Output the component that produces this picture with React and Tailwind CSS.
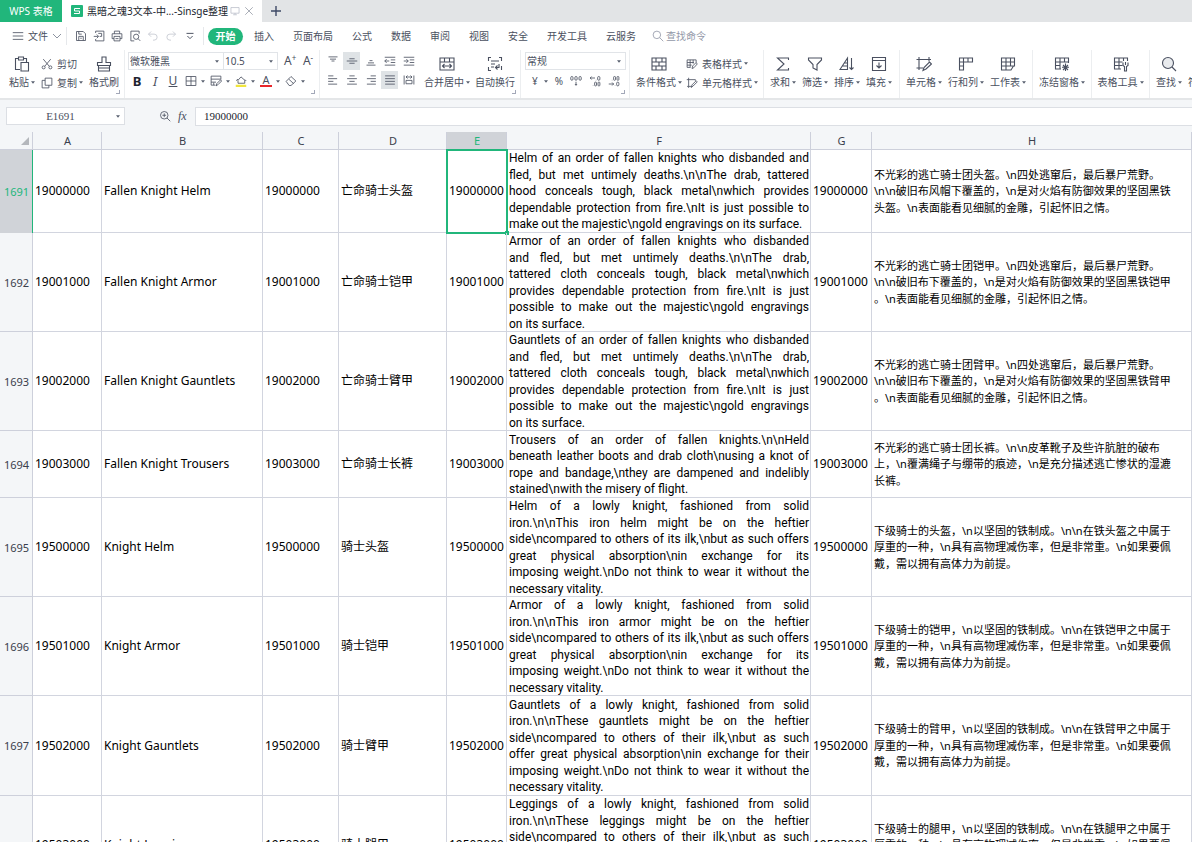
// sheet/App.jsx
const GREEN = "text-[#21b67b]";

/* ---------- icons ---------- */

const ICONS = {
  menu: <path d="M1 3.500h14M1 8h14M1 12.500h14" />,
  save: <><path d="M2 2h9l3 3v9H2z" /><path d="M5 14V8.500h6V14M5 2v3.500h4M7 11h2" /></>,
  exportPdf: <><path d="M3.500 4V1.500h11v13h-11V12" /><path d="M1 8.500h6M5 6l2.500 2.500L5 11M7 4.500h4.500v4H9" /></>,
  print: <><path d="M4.500 5v-3.500h7V5M4 11.500H1.500V5h13v6.500H12" /><path d="M4 8.500h8v6H4zM6 11.500h4" /></>,
  preview: <><path d="M13.500 5V1.500h-11v13H7" /><circle cx="9.500" cy="9" r="3.500" /><path d="M12 11.500l3 3" /></>,
  undo: <path d="M5.500 2L2 5.500 5.500 9M2 5.500h7.500a4 4 0 0 1 0 8H8" />,
  redo: <path d="M10.500 2L14 5.500 10.500 9M14 5.500H6.500a4 4 0 0 0 0 8H8" />,
  more: <path d="M4 5h8M5 8l3 3 3-3" />,
  search: <><circle cx="7" cy="7" r="5.500" fill="#e9ebee" /><path d="M11 11l4 4" /></>,
  find: <><circle cx="6.500" cy="6.500" r="5" /><path d="M10.300 10.300L15 15" /></>,
  zoomIn: <><circle cx="7" cy="7" r="5" /><path d="M10.600 10.600L15 15M4.500 7h5M7 4.500v5" /></>,
  monitor: <path d="M1.500 2.500h13v9h-13zM8 11.500v2M5 14h6" />,
  close: <path d="M2 2l12 12M14 2L2 14" />,
  paste: <><path d="M6 13.500H1.500v-11h3M9.500 2.500h3V6" /><path d="M4.500 1h5v3h-5zM7 6.500h7.500V15H7z" /></>,
  cut: <><path d="M3 1.500l8 9.500M13 1.500L5 11" /><circle cx="3.500" cy="12.500" r="2" /><circle cx="12.500" cy="12.500" r="2" /></>,
  copy: <path d="M5.500 1.500h9v9.500h-9zM5.500 4.500h-4v10h9V11" />,
  brush: <path d="M6 1h4v5.500h4.500v3h-13v-3H6zM2.500 9.500V15h11V9.500M2.500 12h11" />,
  borders: <path d="M1.500 2h13v12h-13zM8 2v12M1.500 8h13" />,
  drawBorder: <path d="M7 13.500H1.500v-12h13V6M1.500 5.500h13M1.500 9.500H8M5 13.500V10M8 14.500l1-3 5-5L15.500 8l-5 5z" />,
  fill: <><path d="M4 7l4-4.500L13 7v4H4zM1.500 7.500l2.500-2M13 6l2 2" /><path d="M1 14.500h14" stroke="#f0e53c" strokeWidth="3" /></>,
  eraser: <path d="M1.500 8.500L8 2l6.500 6-6.500 6H5.500zM5 5.500l6.500 6" />,
  top: <path d="M2 2.500h12M4 5.500h8M6 8h4" />,
  middle: <path d="M1 8h14M4.500 5h7M4.500 11h7" />,
  bottom: <path d="M6 7.500h4M4 10.500h8M2 13.500h12" />,
  outdent: <path d="M1 3h14M9 6.500h6M9 10h6M1 13.500h14M7 8H1M3.500 5.500L1 8l2.500 2.500" />,
  indent: <path d="M1 3h14M9 6.500h6M9 10h6M1 13.500h14M1 8h6M4.500 5.500L7 8l-2.500 2.500" />,
  left: <path d="M1.500 2.500h7M1.500 6.200h12M1.500 9.800h7M1.500 13.500h12" />,
  center: <path d="M4.500 2.500h7M1.500 6.200h13M4.500 9.800h7M1.500 13.500h13" />,
  right: <path d="M7.500 2.500h7M2.500 6.200h12M7.500 9.800h7M2.500 13.500h12" />,
  justify: <path d="M1.500 2.500h13M1.500 6.200h13M1.500 9.800h13M1.500 13.500h13" />,
  distribute: <><path d="M1.500 2v12M14.500 2v12M4 4h8M6 2L4 4l2 2M10 2l2 2-2 2" /><path d="M4 8.500h8v4.500H4z" /></>,
  merge: <path d="M1 2h14v12H1zM1 6h14M5.500 2v4M10.500 2v4M3.500 10h9M5.500 8l-2 2 2 2M10.500 8l2 2-2 2" />,
  wrap: <path d="M4 1.500H1.500V5M12 1.500h2.500V5M4 14.500H1.500V11M14.500 10v4M4 5h8M4 8h4M4 11h3M12 8v3.500H8.500M10.500 9.500l-2 2 2 2" />,
  condFormat: <path d="M1 2h14v12H1zM1 6h14M1 10h14M5 2v4M8 6v4M11 2v4M11 10v4M5 10v4" />,
  tableStyle: <path d="M1.500 2.500h12V6M1.500 2.500v10H6M1.500 6h9M1.500 9.500h6M5.500 2.500v10M9.500 2.500v5M8 14l1-3.500 4.500-4.500L15 8l-4.500 5z" />,
  cellStyle: <path d="M3.500 1v11.500H7M1 3.500h11.500V5M1.500 12.500h2v2M7 14l1-3.500L13.500 5 15 6.500 9.500 12z" />,
  sum: <path d="M13.500 4V2h-11L9 8l-6.500 6h11v-2" />,
  filter: <path d="M1.500 2h13v2L10 8.500V14l-4-2V8.500L1.500 4z" />,
  sort: <path d="M1 13.500L8.500 2v11.500zM3.500 10h5M5.500 7h3M12.500 2v11.500M10.500 11.500l2 2 2-2" />,
  fillDown: <path d="M1.500 1.500h13v13h-13zM1.500 4.500h13M8 6.500V12M5.500 9.500L8 12l2.500-2.500" />,
  cell: <><path d="M3 1v13M.5 3.500H15M13 1v4.500M.5 12H7" /><path d="M7 14.500l1-3 5.500-5.500L15.500 8 10 13z" /></>,
  rowCol: <path d="M1.500 2h13v4h-13zM5.500 2v12h-4V2M10 2v4M1.500 10h4" />,
  worksheet: <path d="M1.500 2h13v8h-13zM1.500 6h13M6 2v12M10.500 2v8M1.500 10v4H11l2.500-4" />,
  freeze: <><path d="M7 13H1.500V2h13v5M1.500 6h13M1.500 9.500h5M6 2v11M10.500 2v4" /><path d="M11.500 7.500V15M8 11.300h7M9 9l5 5M14 9l-5 5" /></>,
  tools: <><path d="M8 13H1.500V2h13v3M1.500 6h8M1.500 9.500h8M6 2v11M10.500 2v3" /><path d="M10 6.500v3l1.500 1V15h2v-4.500L15 9.500v-3M12.500 6v3" /></>,
  thousands: <><rect x="1" y="2" width="3" height="5" rx="1.500" /><rect x="6.500" y="2" width="3" height="5" rx="1.500" /><rect x="12" y="2" width="3" height="5" rx="1.500" /><path d="M8 9v5M6.500 12L8 13.500 9.500 12" /></>,
  incDecimal: <><path d="M8 4H1.500M3.500 2l-2 2 2 2M9.500 6.500v.5M5.500 14v.5" /><rect x="11.500" y="2" width="3" height="5" rx="1.500" /><rect x="7.500" y="9.500" width="2.500" height="5" rx="1" /><rect x="12" y="9.500" width="2.500" height="5" rx="1" /></>,
  decDecimal: <><path d="M1 12h6.500M5.500 10l2 2-2 2M5.500 6.500v.5M9.500 14v.5" /><rect x="7.500" y="2" width="2.500" height="5" rx="1" /><rect x="12" y="2" width="2.500" height="5" rx="1" /><rect x="11.500" y="9.500" width="3" height="5" rx="1.500" /></>,
};

function Icon({ name, className = "size-3" }) {
  return (
    <svg viewBox="0 0 16 16" fill="none" stroke="currentColor" strokeWidth="1.1"
      className={`shrink-0 ${className}`} aria-hidden="true">
      {ICONS[name]}
    </svg>
  );
}

function Caret() {
  return (
    <svg viewBox="0 0 8 5" className="w-1 h-[3px] shrink-0 text-[#59606f]" fill="currentColor" aria-hidden="true">
      <path d="M0 0h8L4 5z" />
    </svg>
  );
}

/* ---------- ribbon parts ---------- */

function Group({ children, className = "", corner }) {
  return (
    <div className={`relative shrink-0 flex items-center pb-0.5 border-r border-[#eceef0] ${className}`}>
      {children}
      {corner && <span className="absolute right-1 bottom-1 size-1 border-r border-b border-[#a3a8b8]" />}
    </div>
  );
}

function BigButton({ icon, label, caret, className = "" }) {
  return (
    <button className={`shrink-0 flex flex-col items-center gap-0.5 whitespace-nowrap ${className}`}>
      <Icon name={icon} className="size-4" />
      <span className="flex items-center gap-0.5 leading-4">{label}{caret && <Caret />}</span>
    </button>
  );
}

function SmallButton({ icon, label, caret }) {
  return (
    <button className="flex items-center gap-1 leading-4 whitespace-nowrap">
      <Icon name={icon} />
      <span className="flex items-center gap-0.5">{label}{caret && <Caret />}</span>
    </button>
  );
}

function AlignButton({ icon, active }) {
  return (
    <button aria-label={icon}
      className={`w-[17px] h-[18px] flex items-center justify-center ${active ? "bg-[#dfe3e6]" : ""}`}>
      <Icon name={icon} />
    </button>
  );
}

function Dropdown({ label, value, className }) {
  return (
    <div className={`relative h-[18px] border border-[#e1e4e8] ${className}`}>
      <select aria-label={label} defaultValue={value}
        className="appearance-none block w-full h-full pl-px bg-transparent outline-none">
        <option>{value}</option>
      </select>
      <span className="absolute right-1 top-[7px] pointer-events-none"><Caret /></span>
    </div>
  );
}

/* ---------- page sections ---------- */

function TabBar() {
  return (
    <div className="h-[22px] shrink-0 flex bg-[#e2e4e6]">
      <button className="w-[62px] bg-[#21b67b] text-white">WPS 表格</button>
      <div className="w-[200px] bg-white flex items-center pl-[9px] gap-1">
        <svg viewBox="0 0 12 12" className="size-3 shrink-0" aria-hidden="true">
          <rect width="12" height="12" rx="1" fill="#21b67b" />
          <path d="M9 3.500H3.500V6h5v2.500H3" fill="none" stroke="#fff" />
        </svg>
        <span className="text-[#20252e] whitespace-nowrap">黑暗之魂3文本-中...-Sinsge整理</span>
        <Icon name="monitor" className="-ml-0.5 size-2.5 text-[#b0b5c2]" />
        <button aria-label="关闭" className="text-[#848a98]"><Icon name="close" className="size-2.5" /></button>
      </div>
      <button aria-label="新建" className="w-7 flex items-center justify-center text-[#3e4966]">
        <svg viewBox="0 0 10 10" className="size-2.5" stroke="currentColor" strokeWidth="1.4"><path d="M5 0v10M0 5h10" /></svg>
      </button>
    </div>
  );
}

const MENUS = ["插入", "页面布局", "公式", "数据", "审阅", "视图", "安全", "开发工具", "云服务"];

function MenuBar() {
  return (
    <div className="h-7 shrink-0 flex items-center bg-white pl-3 whitespace-nowrap">
      <button className="flex items-center w-[55px] h-[18px] border-r border-[#e6e8eb]">
        <Icon name="menu" />
        <span className="ml-1">文件</span>
        <svg viewBox="0 0 8 5" className="ml-[5px] w-2 h-[5px] text-[#8d93a0]" fill="none" stroke="currentColor"><path d="M0 0l4 4 4-4" /></svg>
      </button>
      <div className="flex items-center gap-1.5 w-[137px] h-[18px] pl-2 border-r border-[#e6e8eb]">
        <Icon name="save" />
        <Icon name="exportPdf" />
        <Icon name="print" />
        <Icon name="preview" />
        <Icon name="undo" className="size-3 text-[#c3c7d0]" />
        <Icon name="redo" className="size-3 text-[#c3c7d0]" />
        <Icon name="more" className="size-[14px]" />
      </div>
      <button className="ml-1 w-[35px] h-[17px] rounded-full bg-[#21b67b] text-white font-bold">开始</button>
      <nav className="ml-[11px] flex gap-[19px]">
        {MENUS.map((m) => <button key={m}>{m}</button>)}
      </nav>
      <button className="ml-4 flex items-center gap-0.5 text-[#9398a8]">
        <Icon name="find" />查找命令
      </button>
    </div>
  );
}

function Ribbon() {
  return (
    <div className="h-12 shrink-0 flex bg-white overflow-hidden">
      <Group corner className="w-[125px] pl-[9px]">
        <BigButton icon="paste" label="粘贴" caret className="w-[26px]" />
        <div className="ml-[6px] flex flex-col gap-[3px]">
          <SmallButton icon="cut" label="剪切" />
          <SmallButton icon="copy" label="复制" caret />
        </div>
        <BigButton icon="brush" label="格式刷" className="ml-1 w-[34px]" />
      </Group>

      <Group corner className="w-[195px] pl-[3px]">
        <div className="self-start mt-0.5 flex flex-col gap-0.5">
          <div className="flex items-center">
            <Dropdown label="字体" value="微软雅黑" className="w-24" />
            <Dropdown label="字号" value="10.5" className="w-[54px] border-l-0" />
            <button className="ml-1.5 w-3 text-[12px] leading-4">A<sup className="text-[8px]">+</sup></button>
            <button className="ml-1.5 w-3 text-[12px] leading-4">A<sup className="text-[8px]">-</sup></button>
          </div>
          <div className="flex items-center h-[18px] pl-[3px] gap-1.5">
            <button className="w-3 text-[13px] font-bold text-[#1d2330]">B</button>
            <button className="w-3 text-[13px] italic">I</button>
            <button className="w-3 text-[12px] underline">U</button>
            <div className="flex items-center gap-[5px]">
              <button aria-label="边框" className="flex items-center gap-1"><Icon name="borders" /><Caret /></button>
              <button aria-label="绘图边框" className="flex items-center gap-1"><Icon name="drawBorder" /><Caret /></button>
              <button aria-label="填充颜色" className="flex items-center gap-1"><Icon name="fill" /><Caret /></button>
              <button className="flex items-center gap-1">
                <span className="w-3 h-3 text-[11px] leading-[10px] border-b-2 border-[#e8262b]">A</span><Caret />
              </button>
              <button aria-label="清除" className="flex items-center gap-1"><Icon name="eraser" /><Caret /></button>
            </div>
          </div>
        </div>
      </Group>

      <Group corner className="w-[201px] pl-1">
        <div className="self-start mt-0.5 flex flex-col gap-px">
          <div className="flex gap-0.5">
            <AlignButton icon="top" />
            <AlignButton icon="middle" active />
            <AlignButton icon="bottom" />
            <AlignButton icon="outdent" />
            <AlignButton icon="indent" />
          </div>
          <div className="flex gap-0.5">
            <AlignButton icon="left" />
            <AlignButton icon="center" />
            <AlignButton icon="right" />
            <AlignButton icon="justify" active />
            <AlignButton icon="distribute" />
          </div>
        </div>
        <BigButton icon="merge" label="合并居中" caret className="ml-[7px] w-[46px]" />
        <BigButton icon="wrap" label="自动换行" className="ml-1 w-[42px]" />
      </Group>

      <Group corner className="w-[109px] pl-1">
        <div className="self-start mt-0.5 flex flex-col gap-0.5">
          <Dropdown label="数字格式" value="常规" className="w-[101px]" />
          <div className="flex items-center h-[18px] pl-[7px] gap-[7px]">
            <button className="flex items-center gap-1.5">¥<Caret /></button>
            <button>%</button>
            <button aria-label="千位分隔"><Icon name="thousands" /></button>
            <button aria-label="增加小数位"><Icon name="incDecimal" /></button>
            <button aria-label="减少小数位"><Icon name="decDecimal" /></button>
          </div>
        </div>
      </Group>

      <Group className="w-[134px] pl-1.5">
        <BigButton icon="condFormat" label="条件格式" caret className="w-[46px]" />
        <div className="ml-1 flex flex-col gap-[3px]">
          <SmallButton icon="tableStyle" label="表格样式" caret />
          <SmallButton icon="cellStyle" label="单元格样式" caret />
        </div>
      </Group>

      <Group className="w-[136px] pl-1.5 gap-1.5">
        <BigButton icon="sum" label="求和" caret className="w-[26px]" />
        <BigButton icon="filter" label="筛选" caret className="w-[26px]" />
        <BigButton icon="sort" label="排序" caret className="w-[26px]" />
        <BigButton icon="fillDown" label="填充" caret className="w-[26px]" />
      </Group>

      <Group className="w-[133px] pl-1.5 gap-1.5">
        <BigButton icon="cell" label="单元格" caret className="w-9" />
        <BigButton icon="rowCol" label="行和列" caret className="w-9" />
        <BigButton icon="worksheet" label="工作表" caret className="w-9" />
      </Group>
      <Group className="w-[59px] justify-center"><BigButton icon="freeze" label="冻结窗格" caret /></Group>
      <Group className="w-[58px] justify-center"><BigButton icon="tools" label="表格工具" caret /></Group>
      <div className="flex items-center pb-0.5 pl-1.5 gap-1.5">
        <BigButton icon="search" label="查找" caret className="w-[26px]" />
        <BigButton icon="fillDown" label="符号" caret />
      </div>
    </div>
  );
}

function FormulaBar() {
  return (
    <div className="h-[34px] shrink-0 flex items-center pl-1.5 bg-[#f4f6f8] border-t-2 border-[#e4e6e8]">
      <div className="relative w-[119px] h-[18px] bg-white border border-[#dcdfe4]">
        <input aria-label="名称框" defaultValue="E1691"
          className="block w-full h-full pr-2.5 text-center text-[11px] font-['Liberation_Serif',serif] outline-none" />
        <span className="absolute right-1 top-[7px] pointer-events-none"><Caret /></span>
      </div>
      <Icon name="zoomIn" className="ml-[34px] size-3" />
      <span className="ml-[7px] w-[17px] text-[12px] italic font-['Liberation_Serif',serif]">fx</span>
      <input aria-label="编辑栏" defaultValue="19000000"
        className="flex-1 h-[19px] pl-2 bg-white border border-r-0 border-[#dcdfe4] text-[11px] text-[#20252e] font-['Liberation_Serif',serif] outline-none" />
    </div>
  );
}

/* ---------- sheet ---------- */

const COLUMNS = [
  { key: "A", width: "w-[69px]" },
  { key: "B", width: "w-[161px]" },
  { key: "C", width: "w-[76px]" },
  { key: "D", width: "w-[108px]" },
  { key: "E", width: "w-[60px]" },
  { key: "F", width: "w-[304px]" },
  { key: "G", width: "w-[61px]" },
  { key: "H", width: "" },
];

const KNIGHT_ZH = [
  "厚重的一种，\\n具有高物理减伤率，但是非常重。\\n如果要佩",
  "戴，需以拥有高体力为前提。",
];

const ROWS = [
  {
    no: 1691, id: "19000000", height: "h-[83px]", name: "Fallen Knight Helm", zh: "亡命骑士头盔",
    en: [
      "Helm of an order of fallen knights who disbanded and",
      "fled, but met untimely deaths.\\n\\nThe drab, tattered",
      "hood conceals tough, black metal\\nwhich provides",
      "dependable protection from fire.\\nIt is just possible to",
      "make out the majestic\\ngold engravings on its surface.",
    ],
    desc: [
      "不光彩的逃亡骑士团头盔。\\n四处逃窜后，最后暴尸荒野。",
      "\\n\\n破旧布风帽下覆盖的，\\n是对火焰有防御效果的坚固黑铁",
      "头盔。\\n表面能看见细腻的金雕，引起怀旧之情。",
    ],
  },
  {
    no: 1692, id: "19001000", height: "h-[99px]", name: "Fallen Knight Armor", zh: "亡命骑士铠甲",
    en: [
      "Armor of an order of fallen knights who disbanded",
      "and fled, but met untimely deaths.\\n\\nThe drab,",
      "tattered cloth conceals tough, black metal\\nwhich",
      "provides dependable protection from fire.\\nIt is just",
      "possible to make out the majestic\\ngold engravings",
      "on its surface.",
    ],
    desc: [
      "不光彩的逃亡骑士团铠甲。\\n四处逃窜后，最后暴尸荒野。",
      "\\n\\n破旧布下覆盖的，\\n是对火焰有防御效果的坚固黑铁铠甲",
      "。\\n表面能看见细腻的金雕，引起怀旧之情。",
    ],
  },
  {
    no: 1693, id: "19002000", height: "h-[99px]", name: "Fallen Knight Gauntlets", zh: "亡命骑士臂甲",
    en: [
      "Gauntlets of an order of fallen knights who disbanded",
      "and fled, but met untimely deaths.\\n\\nThe drab,",
      "tattered cloth conceals tough, black metal\\nwhich",
      "provides dependable protection from fire.\\nIt is just",
      "possible to make out the majestic\\ngold engravings",
      "on its surface.",
    ],
    desc: [
      "不光彩的逃亡骑士团臂甲。\\n四处逃窜后，最后暴尸荒野。",
      "\\n\\n破旧布下覆盖的，\\n是对火焰有防御效果的坚固黑铁臂甲",
      "。\\n表面能看见细腻的金雕，引起怀旧之情。",
    ],
  },
  {
    no: 1694, id: "19003000", height: "h-[67px]", name: "Fallen Knight Trousers", zh: "亡命骑士长裤",
    en: [
      "Trousers of an order of fallen knights.\\n\\nHeld",
      "beneath leather boots and drab cloth\\nusing a knot of",
      "rope and bandage,\\nthey are dampened and indelibly",
      "stained\\nwith the misery of flight.",
    ],
    desc: [
      "不光彩的逃亡骑士团长裤。\\n\\n皮革靴子及些许肮脏的破布",
      "上，\\n覆满绳子与绷带的痕迹，\\n是充分描述逃亡惨状的湿漉",
      "长裤。",
    ],
  },
  {
    no: 1695, id: "19500000", height: "h-[99px]", name: "Knight Helm", zh: "骑士头盔",
    en: [
      "Helm of a lowly knight, fashioned from solid",
      "iron.\\n\\nThis iron helm might be on the heftier",
      "side\\ncompared to others of its ilk,\\nbut as such offers",
      "great physical absorption\\nin exchange for its",
      "imposing weight.\\nDo not think to wear it without the",
      "necessary vitality.",
    ],
    desc: ["下级骑士的头盔，\\n以坚固的铁制成。\\n\\n在铁头盔之中属于", ...KNIGHT_ZH],
  },
  {
    no: 1696, id: "19501000", height: "h-[99px]", name: "Knight Armor", zh: "骑士铠甲",
    en: [
      "Armor of a lowly knight, fashioned from solid",
      "iron.\\n\\nThis iron armor might be on the heftier",
      "side\\ncompared to others of its ilk,\\nbut as such offers",
      "great physical absorption\\nin exchange for its",
      "imposing weight.\\nDo not think to wear it without the",
      "necessary vitality.",
    ],
    desc: ["下级骑士的铠甲，\\n以坚固的铁制成。\\n\\n在铁铠甲之中属于", ...KNIGHT_ZH],
  },
  {
    no: 1697, id: "19502000", height: "h-[100px]", name: "Knight Gauntlets", zh: "骑士臂甲",
    en: [
      "Gauntlets of a lowly knight, fashioned from solid",
      "iron.\\n\\nThese gauntlets might be on the heftier",
      "side\\ncompared to others of their ilk,\\nbut as such",
      "offer great physical absorption\\nin exchange for their",
      "imposing weight.\\nDo not think to wear it without the",
      "necessary vitality.",
    ],
    desc: ["下级骑士的臂甲，\\n以坚固的铁制成。\\n\\n在铁臂甲之中属于", ...KNIGHT_ZH],
  },
  {
    no: 1698, id: "19503000", height: "h-[99px]", name: "Knight Leggings", zh: "骑士腿甲",
    en: [
      "Leggings of a lowly knight, fashioned from solid",
      "iron.\\n\\nThese leggings might be on the heftier",
      "side\\ncompared to others of their ilk,\\nbut as such",
      "offer great physical absorption\\nin exchange for their",
      "imposing weight.\\nDo not think to wear it without the",
      "necessary vitality.",
    ],
    desc: ["下级骑士的腿甲，\\n以坚固的铁制成。\\n\\n在铁腿甲之中属于", ...KNIGHT_ZH],
  },
];

// grid lines are inset shadows so they add nothing to the row height
function Cell({ children, className = "" }) {
  return (
    <td className={`p-0 pl-0.5 shadow-[inset_-1px_-1px_0_#d2d5df] ${className}`}>{children}</td>
  );
}

function Sheet() {
  return (
    <div className="flex-1 min-h-0 overflow-hidden bg-white">
      <table className="w-full table-fixed border-separate border-spacing-0 text-[12px] leading-snug text-black">
        <colgroup>
          <col className="w-[33px]" />
          {COLUMNS.map((c) => <col key={c.key} className={c.width} />)}
        </colgroup>
        <thead>
          <tr className="h-[18px] text-[11px] leading-4 text-[#3a404c]">
            <th className="p-0 bg-[#f4f6f8] shadow-[inset_-1px_-1px_0_#cdd0db]">
              <svg viewBox="0 0 8 8" className="ml-auto mr-1 size-2 text-[#b4b7bc]" fill="currentColor" aria-hidden="true"><path d="M8 0v8H0z" /></svg>
            </th>
            {COLUMNS.map(({ key }) => (
              <th key={key} scope="col"
                className={`p-0 font-normal shadow-[inset_-1px_-1px_0_#cdd0db] ${
                  key === "E" ? `bg-[#d0d3d8] ${GREEN}` : "bg-[#f4f6f8]"}`}>
                {key}
              </th>
            ))}
          </tr>
        </thead>
        <tbody>
          {ROWS.map((r) => {
            const selected = r.no === 1691;
            return (
              <tr key={r.no} className={r.height}>
                <th scope="row"
                  className={`p-0 text-[11px] font-normal ${selected
                    ? `bg-[#d0d3d8] ${GREEN} shadow-[inset_-1px_0_0_#21b67b]`
                    : "bg-[#f4f6f8] text-[#3a404c] shadow-[inset_-1px_-1px_0_#cdd0db]"}`}>
                  {r.no}
                </th>
                <Cell>{r.id}</Cell>
                <Cell>{r.name}</Cell>
                <Cell>{r.id}</Cell>
                <Cell>{r.zh}</Cell>
                <Cell className="relative">
                  {r.id}
                  {selected && (
                    <span className="absolute -inset-px border-2 border-[#21b67b]">
                      <span className="absolute -right-[3px] -bottom-[3px] size-1 bg-[#21b67b]" />
                    </span>
                  )}
                </Cell>
                <Cell className="pr-0.5 font-['Roboto',sans-serif]">
                  {r.en.map((line, i) => (
                    <div key={line}
                      className={`whitespace-nowrap text-justify ${i < r.en.length - 1 ? "[text-align-last:justify]" : ""}`}>
                      {line}
                    </div>
                  ))}
                </Cell>
                <Cell>{r.id}</Cell>
                <Cell className="text-[11px] leading-normal">
                  {r.desc.map((line) => <div key={line} className="whitespace-nowrap">{line}</div>)}
                </Cell>
              </tr>
            );
          })}
        </tbody>
      </table>
    </div>
  );
}

export default function App() {
  return (
    <div className="h-screen flex flex-col overflow-hidden bg-white text-[10px] leading-4 text-[#4a5060] font-['Noto_Sans','Noto_Sans_CJK_SC',sans-serif]">
      <TabBar />
      <MenuBar />
      <Ribbon />
      <FormulaBar />
      <Sheet />
    </div>
  );
}
